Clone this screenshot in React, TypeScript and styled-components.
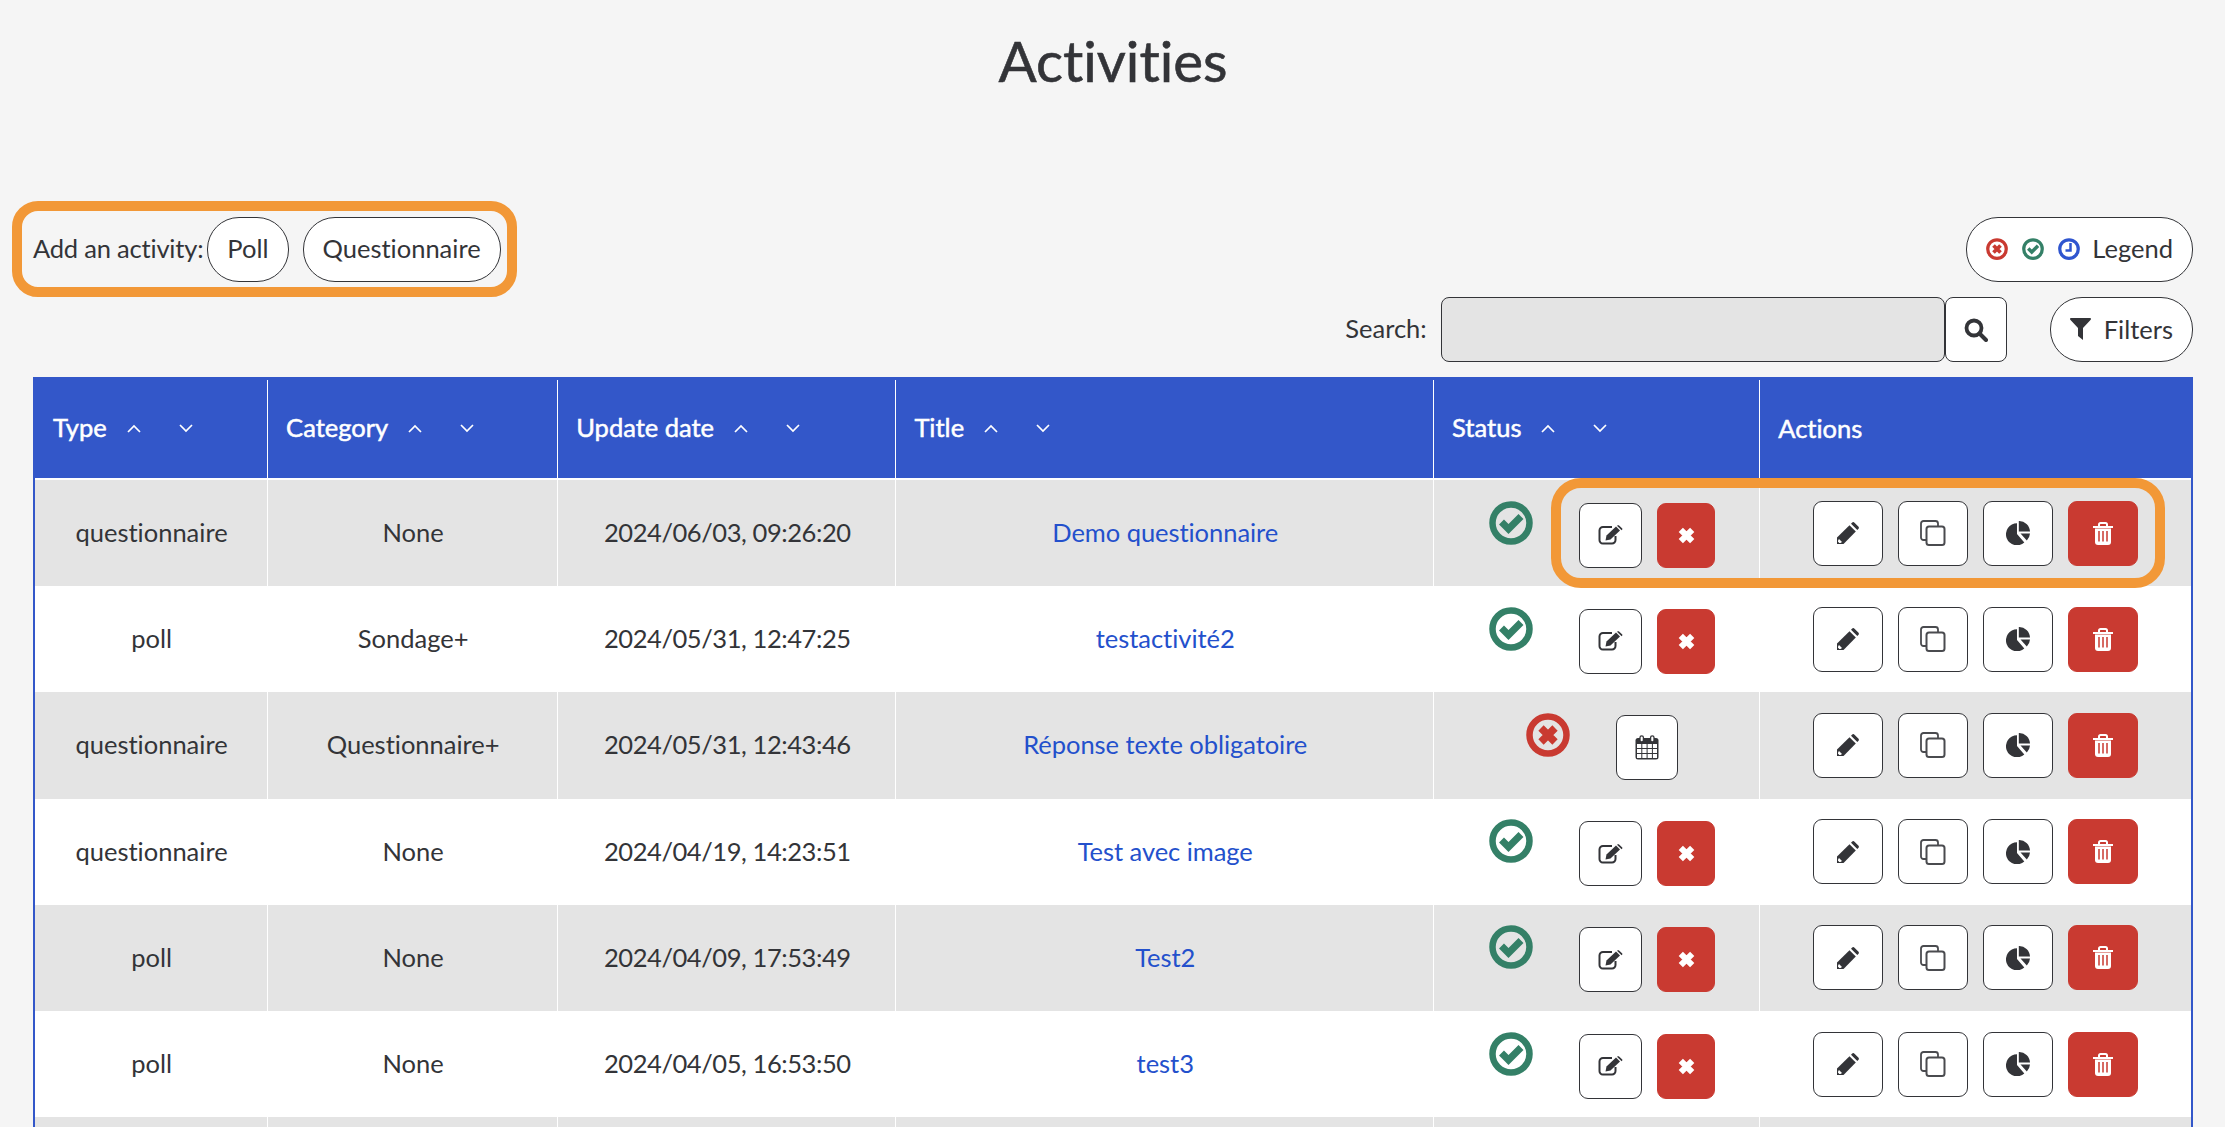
import React from 'react';
import styled, { createGlobalStyle } from 'styled-components';

const TEXT = '#333438';
const BLUE = '#3357c9';
const RED = '#c93a31';
const GREEN = '#348067';
const ORANGE = '#f29837';
const GREY = '#e4e4e4';

const GlobalStyle = createGlobalStyle`
  html, body {
    margin: 0;
    height: 1127px;
    overflow: hidden;
    background: #f5f5f5;
    font-family: Lato, "Liberation Sans", sans-serif;
    font-size: 25.5px;
    font-variant-ligatures: none;
    color: ${TEXT};
  }
`;

const Page = styled.div`
  padding: 0 32px 0 33px;
`;

const Title = styled.h1`
  margin: 0;
  height: 201px;
  font-size: 56.5px;
  line-height: 120px;
  font-weight: 400;
  -webkit-text-stroke: 0.6px ${TEXT};
  text-align: center;
`;

const Toolbar = styled.div`
  display: flex;
  justify-content: space-between;
  align-items: center;
`;

const Highlight = styled.div`
  display: flex;
  align-items: center;
  height: 96px;
  box-sizing: border-box;
  margin-left: -21.5px;
  padding: 0 6px 0 11.5px;
  border: 10px solid ${ORANGE};
  border-radius: 26px;
`;

const AddLabel = styled.span`
  margin: 0 4px 2px 0;
  letter-spacing: -0.2px;
`;

const Pill = styled.button<{ $ml?: number }>`
  display: inline-flex;
  align-items: center;
  justify-content: center;
  gap: 13px;
  height: 65px;
  box-sizing: border-box;
  padding: 0 19px 2px;
  margin-left: ${(p) => p.$ml || 0}px;
  background: #fff;
  border: 1.5px solid ${TEXT};
  border-radius: 32px;
  font: inherit;
  color: inherit;
`;

const LegendIcons = styled.span`
  display: inline-flex;
  gap: 14px;
  margin: 2px -1px 0 0;
`;

const SearchRow = styled.div`
  display: flex;
  justify-content: flex-end;
  align-items: center;
  margin-bottom: 15px;
`;

const SearchLabel = styled.label`
  margin: 0 14px 3px 0;
`;

const SearchInput = styled.input`
  width: 504px;
  height: 65px;
  box-sizing: border-box;
  background: ${GREY};
  border: 1.5px solid ${TEXT};
  border-radius: 8px;
`;

const SearchButton = styled.button`
  display: flex;
  align-items: center;
  justify-content: center;
  width: 62px;
  height: 65px;
  padding: 0;
  margin-right: 43px;
  background: #fff;
  border: 1.5px solid ${TEXT};
  border-radius: 8px;
`;

const TableWrap = styled.div`
  position: relative;
`;

const Table = styled.table`
  width: 100%;
  table-layout: fixed;
  border-collapse: separate;
  border-spacing: 0;
  background: #fff;
  border-left: 2.5px solid ${BLUE};
  border-right: 2.5px solid ${BLUE};
`;

const HeadRow = styled.tr`
  background: ${BLUE};
  height: 103px;
`;

const HeadCell = styled.th<{ $w: number; $plain?: boolean }>`
  width: ${(p) => p.$w}px;
  box-sizing: border-box;
  padding: 0 0 ${(p) => (p.$plain ? 3 : 5)}px 18px;
  color: #fff;
  font-weight: 400;
  font-size: 25.5px;
  -webkit-text-stroke: 0.5px #fff;
  text-align: left;
  box-shadow: inset -1px 0 0 #fff;
  border-top: 3px solid ${BLUE};
  border-bottom: 2px solid #fff;
  &:last-child {
    box-shadow: none;
  }
`;

const HeadInner = styled.span`
  display: flex;
  align-items: center;
`;

const Carets = styled.span`
  display: inline-flex;
  gap: 38px;
  margin: 4px 0 0 20px;
`;

const Row = styled.tr<{ $odd: boolean }>`
  height: 106.2px;
  background: ${(p) => (p.$odd ? GREY : '#fff')};
`;

const TailRow = styled.tr`
  height: 10px;
  background: ${GREY};
`;

const Cell = styled.td`
  padding: 0 0 2px;
  text-align: center;
  box-shadow: inset -1px 0 0 #fff;
  &:last-child {
    box-shadow: none;
  }
`;

const DateCell = styled(Cell)`
  letter-spacing: -0.42px;
`;

const ControlCell = styled(Cell)`
  padding: 0;
`;

const TailCell = styled(Cell)`
  padding: 0;
`;

const TitleLink = styled.a`
  color: #2350cc;
  text-decoration: none;
  letter-spacing: -0.05px;
`;

const StatusGroup = styled.div`
  display: flex;
  justify-content: center;
  align-items: center;
  padding-left: 10px;
`;

const StatusMark = styled.span`
  display: flex;
  margin: 0 46px 21px 0;
`;

const StatusButtons = styled.div`
  display: flex;
  gap: 15px;
  margin-top: 4px;
`;

const ActionGroup = styled.div`
  display: flex;
  justify-content: center;
  gap: 15px;
`;

const IconButton = styled.button<{ $w: number; $danger?: boolean }>`
  display: flex;
  align-items: center;
  justify-content: center;
  width: ${(p) => p.$w}px;
  height: 65px;
  padding: 0;
  background: ${(p) => (p.$danger ? RED : '#fff')};
  border: 1.5px solid ${(p) => (p.$danger ? RED : TEXT)};
  border-radius: 9px;
`;

const RowHighlight = styled.div`
  position: absolute;
  left: 1518px;
  top: 101px;
  width: 614px;
  height: 110px;
  box-sizing: border-box;
  border: 10px solid ${ORANGE};
  border-radius: 30px;
  pointer-events: none;
`;

const Ring = ({ size, color, children }: { size: number; color: string; children: React.ReactNode }) => (
  <svg width={size} height={size} viewBox="0 0 44 44" style={{ display: 'block' }}>
    <circle cx="22" cy="22" r="18.5" fill="none" stroke={color} strokeWidth="6.5" />
    {children}
  </svg>
);

const CheckRing = ({ size }: { size: number }) => (
  <Ring size={size} color={GREEN}>
    <polyline points="12.5,21 19.5,28 32,15.5" fill="none" stroke={GREEN} strokeWidth="7" />
  </Ring>
);

const CrossRing = ({ size }: { size: number }) => (
  <Ring size={size} color={RED}>
    <path d="M15 15l14 14M29 15l-14 14" fill="none" stroke={RED} strokeWidth="7.5" />
  </Ring>
);

const ClockRing = ({ size }: { size: number }) => (
  <Ring size={size} color="#2f55cf">
    <polyline points="25,10 25,25 15,25" fill="none" stroke="#2f55cf" strokeWidth="5" />
  </Ring>
);

const Funnel = () => (
  <svg width="21" height="22" viewBox="0 0 21 22">
    <path d="M1 0h19c1 0 1.300 1 .7 1.700L13 10v12l-5-4v-8L.300 1.700C-.300 1 0 0 1 0z" fill={TEXT} />
  </svg>
);

const Magnifier = () => (
  <svg width="24" height="24" viewBox="0 0 24 24">
    <circle cx="10" cy="10" r="7.500" fill="none" stroke={TEXT} strokeWidth="3.800" />
    <path d="M15.500 15.500L22 22" stroke={TEXT} strokeWidth="4" strokeLinecap="round" />
  </svg>
);

const EditIcon = () => (
  <svg width="25" height="20" viewBox="0 0 25 20">
    <path d="M14 2H5a3.500 3.500 0 0 0-3.500 3.500v9A3.500 3.500 0 0 0 5 18.500h9a3.500 3.500 0 0 0 3.500-3.500v-4" fill="none" stroke={TEXT} strokeWidth="2" />
    <path d="M7.500 15.500l1-5L18 1.500l4 4-9.500 9z" fill={TEXT} />
    <path d="M19 .800l.8-.6 1 0 3.500 3.300 0 1-.7.700z" fill={TEXT} />
  </svg>
);

const CrossIcon = () => (
  <svg width="17" height="17" viewBox="0 0 17 17">
    <path d="M2.800 2.800l11.400 11.400M14.200 2.800L2.800 14.200" stroke="#fff" strokeWidth="6" />
  </svg>
);

const PencilIcon = () => (
  <svg width="22" height="22" viewBox="0 0 22 22">
    <path d="M0 22v-6.500L12.500 3.200l6.300 6.300L6.500 22z" fill={TEXT} />
    <path d="M14 1.700l1-1c.8-.8 1.800-.8 2.500 0l3.800 3.800c.8.700.8 1.700 0 2.500l-1 1z" fill={TEXT} />
    <path d="M2 17l3 3-1.500 1H1v-2.500z" fill="#fff" />
    <path d="M.8 19.500L2.500 21.200H.8z" fill={TEXT} />
  </svg>
);

const CopyIcon = () => (
  <svg width="26" height="26" viewBox="0 0 26 26">
    <rect x="1" y="1" width="17" height="19" rx="2.500" fill="none" stroke="#4a4b4f" strokeWidth="1.800" />
    <rect x="6.500" y="6.500" width="18" height="18.500" rx="2.500" fill="#fff" stroke="#4a4b4f" strokeWidth="2" />
  </svg>
);

const PieIcon = () => (
  <svg width="24" height="24" viewBox="0 0 24 24">
    <path d="M11 2.300A11 11 0 1 0 18.300 21.500L11 13z" fill={TEXT} />
    <path d="M12.800 0A11 11 0 0 1 24 10.500H12.800z" fill={TEXT} />
    <path d="M14.500 12.500H24A11 11 0 0 1 20.800 19.500z" fill={TEXT} />
  </svg>
);

const TrashIcon = () => (
  <svg width="20" height="23" viewBox="0 0 20 23">
    <path d="M0 4h20v2H0z" fill="#fff" />
    <path d="M6 4.500V2.500C6 1.600 6.600 1 7.500 1h5c.9 0 1.500.6 1.500 1.500v2" fill="none" stroke="#fff" strokeWidth="2" />
    <path d="M2 6.500h16V20a3 3 0 0 1-3 3H5a3 3 0 0 1-3-3z" fill="#fff" />
    <path d="M6 9v10.500M10 9v10.500M14 9v10.500" stroke={RED} strokeWidth="1.500" />
  </svg>
);

const CalendarIcon = () => (
  <svg width="24" height="25" viewBox="0 0 24 25">
    <rect x="0.500" y="3" width="23" height="21.500" rx="2.500" fill={TEXT} />
    <path d="M2 9h4.300v4H2zM7.300 9h4.300v4H7.300zM12.600 9h4.300v4h-4.300zM17.900 9h4.100v4h-4.100zM2 14h4.300v4H2zM7.300 14h4.300v4H7.300zM12.600 14h4.300v4h-4.300zM17.900 14h4.100v4h-4.100zM2 19h4.300v4H2zM7.300 19h4.300v4H7.300zM12.600 19h4.300v4h-4.300zM17.900 19h4.100v4h-4.100z" fill="#fff" />
    <rect x="5" y="0.800" width="3.400" height="6.200" rx="1.700" fill="#fff" stroke={TEXT} strokeWidth="1.300" />
    <rect x="15.600" y="0.800" width="3.400" height="6.200" rx="1.700" fill="#fff" stroke={TEXT} strokeWidth="1.300" />
  </svg>
);

const Caret = ({ up }: { up?: boolean }) => (
  <svg width="14" height="9" viewBox="0 0 14 9">
    <polyline points={up ? '1,8 7,2 13,8' : '1,1 7,7 13,1'} fill="none" stroke="#fff" strokeWidth="1.700" />
  </svg>
);

const columns = [
  { label: 'Type', width: 233 },
  { label: 'Category', width: 290 },
  { label: 'Update date', width: 338 },
  { label: 'Title', width: 537.500 },
  { label: 'Status', width: 326 },
  { label: 'Actions', width: 430.500, plain: true },
];

const rows = [
  { type: 'questionnaire', category: 'None', date: '2024/06/03, 09:26:20', title: 'Demo questionnaire', active: true },
  { type: 'poll', category: 'Sondage+', date: '2024/05/31, 12:47:25', title: 'testactivité2', active: true },
  { type: 'questionnaire', category: 'Questionnaire+', date: '2024/05/31, 12:43:46', title: 'Réponse texte obligatoire', active: false },
  { type: 'questionnaire', category: 'None', date: '2024/04/19, 14:23:51', title: 'Test avec image', active: true },
  { type: 'poll', category: 'None', date: '2024/04/09, 17:53:49', title: 'Test2', active: true },
  { type: 'poll', category: 'None', date: '2024/04/05, 16:53:50', title: 'test3', active: true },
];

export default function App() {
  return (
    <Page>
      <GlobalStyle />
      <Title>Activities</Title>
      <Toolbar>
        <Highlight>
          <AddLabel>Add an activity:</AddLabel>
          <Pill>Poll</Pill>
          <Pill $ml={14}>Questionnaire</Pill>
        </Highlight>
        <Pill>
          <LegendIcons>
            <CrossRing size={22} />
            <CheckRing size={22} />
            <ClockRing size={22} />
          </LegendIcons>
          Legend
        </Pill>
      </Toolbar>
      <SearchRow>
        <SearchLabel>Search:</SearchLabel>
        <SearchInput />
        <SearchButton>
          <Magnifier />
        </SearchButton>
        <Pill>
          <Funnel />
          Filters
        </Pill>
      </SearchRow>
      <TableWrap>
        <Table>
          <thead>
            <HeadRow>
              {columns.map((c) => (
                <HeadCell key={c.label} $w={c.width} $plain={c.plain}>
                  <HeadInner>
                    {c.label}
                    {!c.plain && (
                      <Carets>
                        <Caret up />
                        <Caret />
                      </Carets>
                    )}
                  </HeadInner>
                </HeadCell>
              ))}
            </HeadRow>
          </thead>
          <tbody>
            {rows.map((r, i) => (
              <Row key={r.title} $odd={i % 2 === 0}>
                <Cell>{r.type}</Cell>
                <Cell>{r.category}</Cell>
                <DateCell>{r.date}</DateCell>
                <Cell>
                  <TitleLink href="#">{r.title}</TitleLink>
                </Cell>
                <ControlCell>
                  <StatusGroup>
                    <StatusMark>{r.active ? <CheckRing size={44} /> : <CrossRing size={44} />}</StatusMark>
                    <StatusButtons>
                      {r.active ? (
                        <>
                          <IconButton $w={63}>
                            <EditIcon />
                          </IconButton>
                          <IconButton $w={58} $danger>
                            <CrossIcon />
                          </IconButton>
                        </>
                      ) : (
                        <IconButton $w={62}>
                          <CalendarIcon />
                        </IconButton>
                      )}
                    </StatusButtons>
                  </StatusGroup>
                </ControlCell>
                <ControlCell>
                  <ActionGroup>
                    <IconButton $w={70}>
                      <PencilIcon />
                    </IconButton>
                    <IconButton $w={70}>
                      <CopyIcon />
                    </IconButton>
                    <IconButton $w={70}>
                      <PieIcon />
                    </IconButton>
                    <IconButton $w={70} $danger>
                      <TrashIcon />
                    </IconButton>
                  </ActionGroup>
                </ControlCell>
              </Row>
            ))}
            <TailRow>
              {columns.map((c) => (
                <TailCell key={c.label} />
              ))}
            </TailRow>
          </tbody>
        </Table>
        <RowHighlight />
      </TableWrap>
    </Page>
  );
}
